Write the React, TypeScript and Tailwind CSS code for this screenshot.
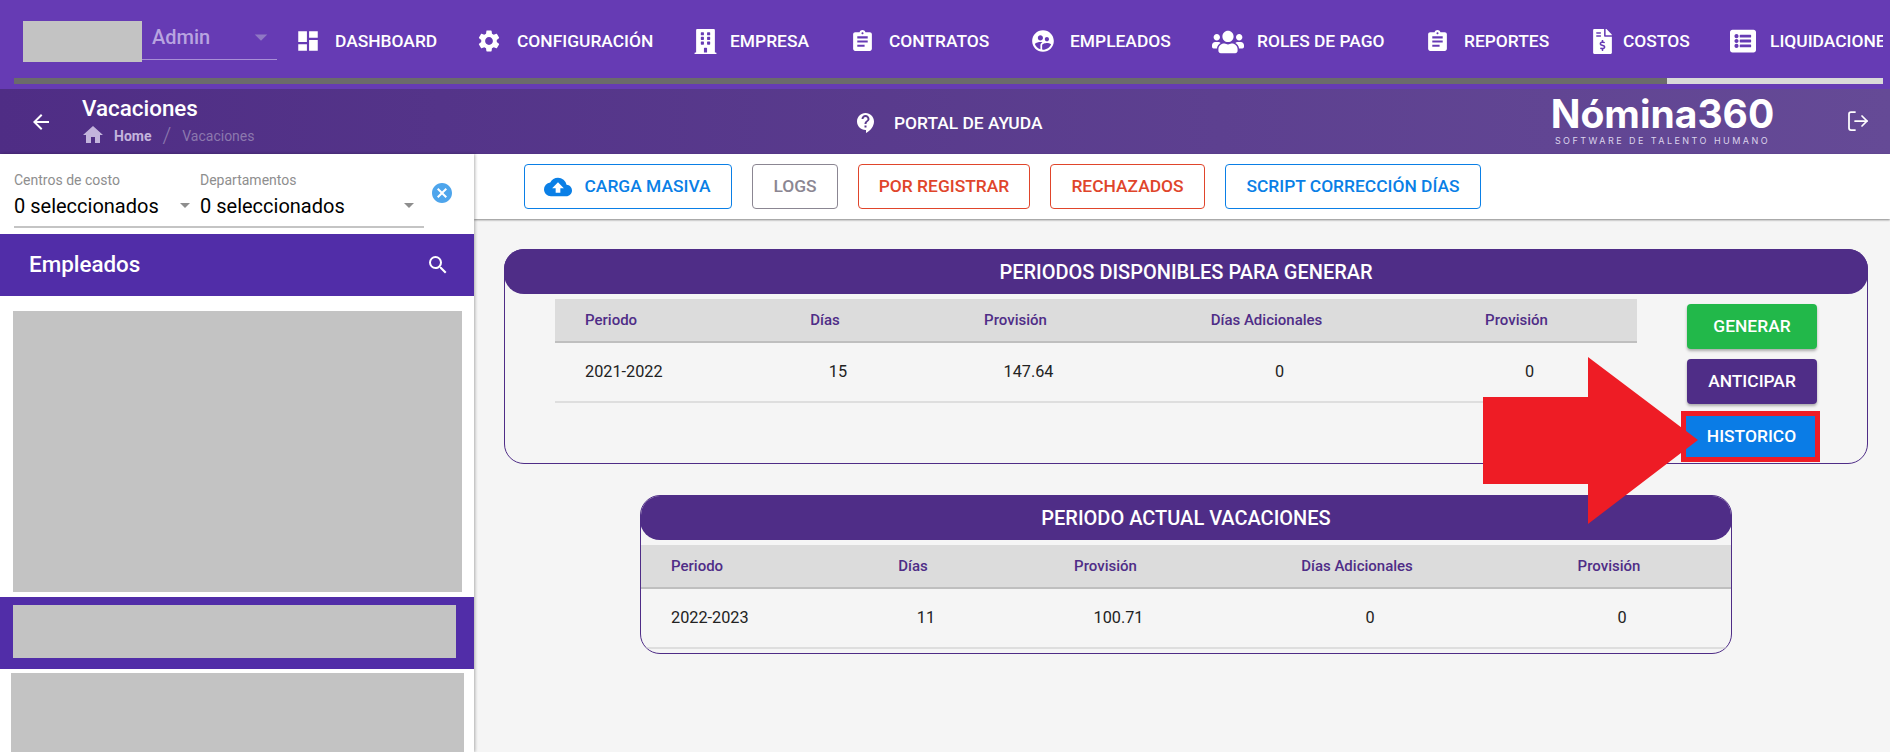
import React from "react";
import { MdDashboard, MdSettings, MdAssignment, MdSupervisedUserCircle, MdContactSupport, MdArrowBack, MdHome, MdCloudUpload, MdSearch, MdCancel, MdArrowDropDown } from "react-icons/md";
import { FaBuilding, FaUsers, FaFileInvoiceDollar, FaListAlt } from "react-icons/fa";
import { LogOut } from "lucide-react";

const nav = [
  { label: "DASHBOARD", item: "w-[181px]", box: "w-[37px]", icon: <MdDashboard className="text-[26px] -ml-[3px]" /> },
  { label: "CONFIGURACIÓN", item: "w-[214px]", box: "w-[38px]", icon: <MdSettings className="text-[26px] -ml-[3px]" /> },
  { label: "EMPRESA", item: "w-[159px]", box: "w-[37px]", icon: <FaBuilding className="text-[25px]" /> },
  { label: "CONTRATOS", item: "w-[180px]", box: "w-[37px]", icon: <MdAssignment className="text-[25px] -ml-[2px]" /> },
  { label: "EMPLEADOS", item: "w-[180px]", box: "w-[38px]", icon: <MdSupervisedUserCircle className="text-[26px] -ml-[2px]" /> },
  { label: "ROLES DE PAGO", item: "w-[215px]", box: "w-[45px]", icon: <FaUsers className="text-[32px]" /> },
  { label: "REPORTES", item: "w-[163px]", box: "w-[37px]", icon: <MdAssignment className="text-[25px] -ml-[2px]" /> },
  { label: "COSTOS", item: "w-[140px]", box: "w-[33px]", icon: <FaFileInvoiceDollar className="text-[25px]" /> },
  { label: "LIQUIDACIONES", item: "w-[160px]", box: "w-[40px]", icon: <FaListAlt className="text-[26px]" /> },
];

type Row = string[];

function Table({ cols, head, row, className }: { cols: string; head: Row; row: Row; className: string }) {
  return (
    <div className={className}>
      <div className={`${cols} h-[44px] items-center bg-[#dcdcdc] border-b-2 border-[#bfbfbf] text-[15px] font-medium text-[#4f2d87]`}>
        {head.map((h, i) => (
          <div key={i} className={i === 0 ? "pl-[30px]" : "text-center"}>{h}</div>
        ))}
      </div>
      <div className={`${cols} h-[60px] items-center border-b-2 border-[#dedede] text-[16.25px] text-[#222222]`}>
        {row.map((v, i) => (
          <div key={i} className={i === 0 ? "pl-[30px]" : "text-center pl-[26px]"}>{v}</div>
        ))}
      </div>
    </div>
  );
}

const outline = "h-[45px] rounded-[4px] border bg-white flex items-center justify-center text-[17.4px] font-medium";

export default function App() {
  return (
    <div className="w-[1890px] h-[752px] overflow-hidden flex flex-col bg-[#f5f5f5] font-['Roboto',sans-serif]">
      {/* top bar */}
      <div className="h-[89px] shrink-0 bg-[#663bb4] pt-[21px] pl-[14px]">
        <div className="h-[57px] flex items-start pl-[9px] overflow-hidden w-[1869px]">
          <div className="w-[119px] h-[41px] bg-[#c3c3c3] shrink-0" />
          <div className="w-[135px] h-[40px] shrink-0 border-b border-[#a88fd6] relative flex items-center pl-[10px] pb-[6px] -mt-[1px] text-[20px] font-medium text-[#b8a4e0]">
            Admin
            <MdArrowDropDown className="absolute right-[1px] top-[2px] text-[30px] text-[#8f78c4]" />
          </div>
          <div className="ml-[21px] flex items-center h-[41px] text-white text-[17.4px] font-medium shrink-0">
            {nav.map((n) => (
              <div key={n.label} className={`${n.item} flex items-center shrink-0`}>
                <div className={`${n.box} shrink-0 flex items-center`}>{n.icon}</div>
                <span>{n.label}</span>
              </div>
            ))}
          </div>
        </div>
        <div className="w-[1869px] h-[6px] bg-[#d9d9d9]">
          <div className="w-[1653px] h-full bg-[#6b6b6b]" />
        </div>
      </div>

      {/* sub header */}
      <div className="h-[65px] shrink-0 flex items-center bg-gradient-to-r from-[#4f2d85] to-[#654a96] text-white relative">
        <MdArrowBack className="ml-[29px] text-[24px]" />
        <div className="ml-[29px] w-[200px] -mt-[1px]">
          <div className="text-[22.4px] font-medium leading-[24px]">Vacaciones</div>
          <div className="flex items-center text-[14px] mt-[5px] leading-[18px]">
            <MdHome className="text-[24px] text-[#c3b4dc] -mt-[2px] -ml-[1px]" />
            <span className="ml-[9px] font-bold text-[#c3b4dc]">Home</span>
            <span className="mx-[11px] text-[22px] font-light text-[#8c78ae]">/</span>
            <span className="text-[#8c78ae]">Vacaciones</span>
          </div>
        </div>
        <div className="ml-[574px] flex items-center mt-[4px]">
          <MdContactSupport className="text-[24px] -ml-[2px]" />
          <span className="ml-[16px] text-[17.4px] font-medium">PORTAL DE AYUDA</span>
        </div>
        <div className="ml-[509px] flex flex-col items-center w-[222px] -mt-[4px]">
          <div className="font-['Inter',sans-serif] text-[39px] font-bold leading-[42px]">Nómina360</div>
          <div className="font-['Inter',sans-serif] text-[9px] tracking-[2.45px] leading-[12px] text-[#dcd4ec] whitespace-nowrap">SOFTWARE DE TALENTO HUMANO</div>
        </div>
        <LogOut size={24} strokeWidth={1.75} className="ml-[73px] -mt-[1px]" />
      </div>

      {/* body */}
      <div className="flex-1 flex min-h-0">
        {/* sidebar */}
        <div className="w-[474px] shrink-0 bg-white shadow-[1px_0_3px_rgba(0,0,0,0.3)] z-10 flex flex-col overflow-hidden">
          <div className="h-[80px] shrink-0 relative px-[14px] pt-[18px]">
            <div className="flex w-[410px] h-[56px] border-b-2 border-[#c4c4c4]">
              <div className="w-[186px] relative">
                <div className="text-[14px] leading-[16px] text-[#8e8e8e]">Centros de costo</div>
                <div className="text-[20px] leading-[24px] mt-[6px] text-black">0 seleccionados</div>
                <MdArrowDropDown className="absolute right-[3px] top-[21px] text-[24px] text-[#8e8e8e]" />
              </div>
              <div className="flex-1 relative">
                <div className="text-[14px] leading-[16px] text-[#8e8e8e]">Departamentos</div>
                <div className="text-[20px] leading-[24px] mt-[6px] text-black">0 seleccionados</div>
                <MdArrowDropDown className="absolute right-[3px] top-[21px] text-[24px] text-[#8e8e8e]" />
              </div>
            </div>
            <MdCancel className="absolute left-[430px] top-[27px] text-[24px] text-[#4ea5ec]" />
          </div>
          <div className="h-[62px] shrink-0 bg-[#512da8] flex items-center justify-between pl-[29px] pr-[24px] text-white">
            <span className="text-[22.4px] font-medium">Empleados</span>
            <MdSearch className="text-[24px]" />
          </div>
          <div className="mt-[15px] ml-[13px] w-[449px] h-[281px] shrink-0 bg-[#c3c3c3]" />
          <div className="mt-[5px] h-[72px] shrink-0 bg-[#512da8] pt-[8px] pl-[13px]">
            <div className="w-[443px] h-[53px] bg-[#c3c3c3]" />
          </div>
          <div className="mt-[4px] ml-[11px] w-[453px] h-[79px] shrink-0 bg-[#c3c3c3]" />
        </div>

        {/* main */}
        <div className="flex-1 flex flex-col min-w-0 relative">
          <div className="h-[65px] shrink-0 bg-white shadow-[0_1px_2px_rgba(0,0,0,0.45)] flex items-start pt-[10px] pl-[50px] gap-[20px]">
            <div className={`${outline} w-[208px] border-[#0a7fe6] text-[#0a7fe6]`}>
              <MdCloudUpload className="text-[28px] -ml-[2px] mr-[13px]" />
              CARGA MASIVA
            </div>
            <div className={`${outline} w-[86px] border-[#8b8692] text-[#8b8692]`}>LOGS</div>
            <div className={`${outline} w-[172px] border-[#e0452b] text-[#e0452b]`}>POR REGISTRAR</div>
            <div className={`${outline} w-[155px] border-[#e0452b] text-[#e0452b]`}>RECHAZADOS</div>
            <div className={`${outline} w-[256px] border-[#0a7fe6] text-[#0a7fe6]`}>SCRIPT CORRECCIÓN DÍAS</div>
          </div>

          {/* card 1 */}
          <div className="ml-[30px] mt-[30px] w-[1364px] h-[215px] shrink-0 rounded-[20px] border border-[#4f2d87]">
            <div className="-m-[1px] h-[45px] rounded-[20px] bg-[#4f2d87] flex items-center justify-center text-white text-[20px] font-medium">
              PERIODOS DISPONIBLES PARA GENERAR
            </div>
            <div className="flex">
              <Table
                className="ml-[50px] mt-[6px] w-[1082px] shrink-0"
                cols="grid grid-cols-[180px_180px_201px_301px_199px_21px]"
                head={["Periodo", "Días", "Provisión", "Días Adicionales", "Provisión"]}
                row={["2021-2022", "15", "147.64", "0", "0"]}
              />
              <div className="ml-[50px] mt-[11px] w-[130px] flex flex-col gap-[10px] text-white text-[17.4px] font-medium">
                <div className="h-[45px] rounded-[4px] bg-[#22b84a] shadow-[0_2px_3px_rgba(0,0,0,0.3)] flex items-center justify-center">GENERAR</div>
                <div className="h-[45px] rounded-[4px] bg-[#4f2d87] shadow-[0_2px_3px_rgba(0,0,0,0.3)] flex items-center justify-center">ANTICIPAR</div>
                <div className="-ml-[6px] -mt-[3px] w-[139px] h-[51px] border-[5px] border-[#ee1c25] bg-[#0a7ce6] flex items-center justify-center pl-[2px]">HISTORICO</div>
              </div>
            </div>
          </div>

          {/* card 2 */}
          <div className="ml-[166px] mt-[31px] w-[1092px] h-[159px] shrink-0 rounded-[20px] border border-[#4f2d87] overflow-hidden">
            <div className="-m-[1px] h-[45px] rounded-[20px] bg-[#4f2d87] flex items-center justify-center text-white text-[20px] font-medium">
              PERIODO ACTUAL VACACIONES
            </div>
            <Table
              className="mt-[6px]"
              cols="grid grid-cols-[182px_180px_205px_298px_206px_19px]"
              head={["Periodo", "Días", "Provisión", "Días Adicionales", "Provisión"]}
              row={["2022-2023", "11", "100.71", "0", "0"]}
            />
          </div>

          {/* annotation arrow, lies over the cards */}
          <svg className="absolute left-[1009px] top-[203px]" width="215" height="167" viewBox="0 0 215 167">
            <polygon points="0,40 105,40 105,0 215,83 105,167 105,127 0,127" fill="#ee1c25" />
          </svg>
        </div>
      </div>
    </div>
  );
}
